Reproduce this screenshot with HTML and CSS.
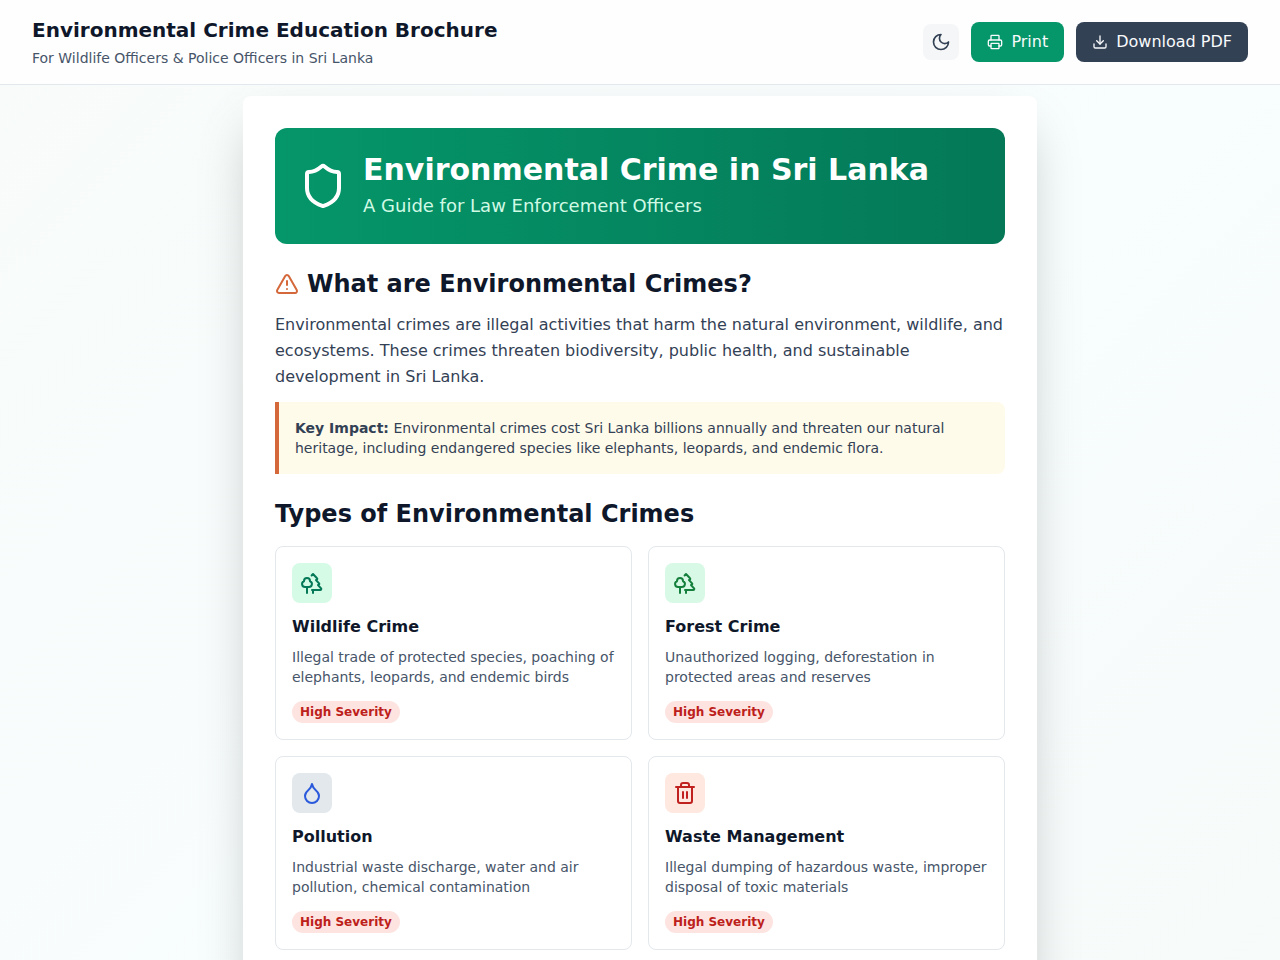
FILE: index.html
```html
<!DOCTYPE html>
<html lang="en">
<head>
    <meta charset="UTF-8">
    <meta name="viewport" content="width=device-width, initial-scale=1.0">
    <title>Environmental Crime Education Brochure</title>
    <link rel="stylesheet" href="styles.css">
</head>
<body>
    <header class="toolbar">
        <div>
            <h1 class="toolbar-title">Environmental Crime Education Brochure</h1>
            <p class="toolbar-subtitle">For Wildlife Officers &amp; Police Officers in Sri Lanka</p>
        </div>
        <div class="toolbar-actions">
            <button type="button" class="btn-theme" aria-label="Toggle dark mode">
                <svg class="icon" width="20" height="20" viewBox="0 0 24 24"><path d="M12 3a6 6 0 0 0 9 9 9 9 0 1 1-9-9Z"/></svg>
            </button>
            <button type="button" class="btn btn-print">
                <svg class="icon" width="16" height="16" viewBox="0 0 24 24"><path d="M6 18H4a2 2 0 0 1-2-2v-5a2 2 0 0 1 2-2h16a2 2 0 0 1 2 2v5a2 2 0 0 1-2 2h-2"/><path d="M6 9V3a1 1 0 0 1 1-1h10a1 1 0 0 1 1 1v6"/><rect x="6" y="14" width="12" height="8" rx="1"/></svg>
                Print
            </button>
            <button type="button" class="btn btn-download">
                <svg class="icon" width="16" height="16" viewBox="0 0 24 24"><path d="M21 15v4a2 2 0 0 1-2 2H5a2 2 0 0 1-2-2v-4"/><path d="m7 10 5 5 5-5"/><path d="M12 15V3"/></svg>
                Download PDF
            </button>
        </div>
    </header>

    <main class="page">
        <div class="banner">
            <svg class="icon" width="48" height="48" viewBox="0 0 24 24"><path d="M20 13c0 5-3.5 7.5-7.66 8.95a1 1 0 0 1-.67-.01C7.5 20.5 4 18 4 13V6a1 1 0 0 1 1-1c2 0 4.5-1.2 6.24-2.72a1.17 1.17 0 0 1 1.52 0C14.51 3.81 17 5 19 5a1 1 0 0 1 1 1z"/></svg>
            <div>
                <h2 class="banner-title">Environmental Crime in Sri Lanka</h2>
                <p class="banner-subtitle">A Guide for Law Enforcement Officers</p>
            </div>
        </div>

        <section class="section">
            <h2 class="section-title">
                <svg class="icon icon-warning" width="24" height="24" viewBox="0 0 24 24"><path d="m21.73 18-8-14a2 2 0 0 0-3.48 0l-8 14A2 2 0 0 0 4 21h16a2 2 0 0 0 1.73-3"/><path d="M12 9v4"/><path d="M12 17h.01"/></svg>
                What are Environmental Crimes?
            </h2>
            <p class="intro">Environmental crimes are illegal activities that harm the natural environment, wildlife, and ecosystems. These crimes threaten biodiversity, public health, and sustainable development in Sri Lanka.</p>
            <p class="callout"><strong>Key Impact:</strong> Environmental crimes cost Sri Lanka billions annually and threaten our natural heritage, including endangered species like elephants, leopards, and endemic flora.</p>
        </section>

        <section class="section">
            <h2 class="section-title">Types of Environmental Crimes</h2>
            <div class="crime-grid">
                <article class="crime-card">
                    <div class="crime-icon wildlife">
                        <svg class="icon" width="24" height="24" viewBox="0 0 24 24"><path d="M10 10v.2A3 3 0 0 1 8.9 16H5a3 3 0 0 1-1-5.8V10a3 3 0 0 1 6 0Z"/><path d="M7 16v6"/><path d="M13 19v3"/><path d="M12 19h8.3a1 1 0 0 0 .7-1.7L18 14h.3a1 1 0 0 0 .7-1.7L16 9h.2a1 1 0 0 0 .8-1.7L13 3l-1.4 1.5"/></svg>
                    </div>
                    <h3>Wildlife Crime</h3>
                    <p>Illegal trade of protected species, poaching of elephants, leopards, and endemic birds</p>
                    <div class="severity"><span class="badge">High Severity</span></div>
                </article>
                <article class="crime-card">
                    <div class="crime-icon forest">
                        <svg class="icon" width="24" height="24" viewBox="0 0 24 24"><path d="M10 10v.2A3 3 0 0 1 8.9 16H5a3 3 0 0 1-1-5.8V10a3 3 0 0 1 6 0Z"/><path d="M7 16v6"/><path d="M13 19v3"/><path d="M12 19h8.3a1 1 0 0 0 .7-1.7L18 14h.3a1 1 0 0 0 .7-1.7L16 9h.2a1 1 0 0 0 .8-1.7L13 3l-1.4 1.5"/></svg>
                    </div>
                    <h3>Forest Crime</h3>
                    <p>Unauthorized logging, deforestation in protected areas and reserves</p>
                    <div class="severity"><span class="badge">High Severity</span></div>
                </article>
                <article class="crime-card">
                    <div class="crime-icon pollution">
                        <svg class="icon" width="24" height="24" viewBox="0 0 24 24"><path d="M12 22a7 7 0 0 0 7-7c0-2-1-3.9-3-5.5s-3.5-4-4-6.5c-.5 2.5-2 4.9-4 6.5C6 11.1 5 13 5 15a7 7 0 0 0 7 7z"/></svg>
                    </div>
                    <h3>Pollution</h3>
                    <p>Industrial waste discharge, water and air pollution, chemical contamination</p>
                    <div class="severity"><span class="badge">High Severity</span></div>
                </article>
                <article class="crime-card">
                    <div class="crime-icon waste">
                        <svg class="icon" width="24" height="24" viewBox="0 0 24 24"><path d="M3 6h18"/><path d="M19 6v14c0 1-1 2-2 2H7c-1 0-2-1-2-2V6"/><path d="M8 6V4c0-1 1-2 2-2h4c1 0 2 1 2 2v2"/><path d="M10 11v6"/><path d="M14 11v6"/></svg>
                    </div>
                    <h3>Waste Management</h3>
                    <p>Illegal dumping of hazardous waste, improper disposal of toxic materials</p>
                    <div class="severity"><span class="badge">High Severity</span></div>
                </article>
            </div>
        </section>
    </main>
</body>
</html>
```

FILE: styles.css
```css
:root {
    --green: #059669;
    --green-dark: #047857;
    --text-dark: #0f172a;
    --text: #334155;
    --text-muted: #475569;
    --border: #e2e8ec;
    --warning: #d4683a;
}

* {
    box-sizing: border-box;
}

body {
    margin: 0;
    min-height: 100vh;
    font-family: "DejaVu Sans", sans-serif;
    font-size: 16px;
    line-height: 24px;
    color: var(--text-dark);
    background: linear-gradient(to bottom right, #f8fbfa, #f8fdfd, #f6faf9);
}

h1, h2, h3, p {
    margin: 0;
}

button {
    border: none;
    font: inherit;
    cursor: pointer;
}

.icon {
    display: block;
    flex-shrink: 0;
    fill: none;
    stroke: currentColor;
    stroke-width: 2;
    stroke-linecap: round;
    stroke-linejoin: round;
}

/* Top bar */
.toolbar {
    position: sticky;
    top: 0;
    display: flex;
    align-items: center;
    justify-content: space-between;
    padding: 16px 32px;
    background: #fefefe;
    border-bottom: 1px solid var(--border);
    z-index: 10;
}

.toolbar-title {
    font-size: 20px;
    line-height: 28px;
    margin-bottom: 4px;
}

.toolbar-subtitle {
    font-size: 14px;
    line-height: 20px;
    color: var(--text-muted);
}

.toolbar-actions {
    display: flex;
    align-items: center;
    gap: 12px;
}

.btn-theme {
    padding: 8px;
    border-radius: 8px;
    background: #f4f6f7;
    color: var(--text);
}

.btn {
    display: flex;
    align-items: center;
    gap: 8px;
    padding: 8px 16px;
    border-radius: 8px;
    color: #f8fafc;
}

.btn-print {
    background: var(--green);
}

.btn-download {
    background: #334155;
}

/* Brochure page */
.page {
    max-width: 794px;
    min-height: 1123px;
    margin: 11px auto 48px;
    padding: 32px;
    border-radius: 8px;
    background: #ffffff;
    box-shadow: 0 25px 50px -12px rgba(0, 0, 0, 0.25);
}

.banner {
    display: flex;
    align-items: center;
    gap: 16px;
    padding: 24px;
    border-radius: 12px;
    background: linear-gradient(to right, var(--green), var(--green-dark));
    color: #ffffff;
}

.banner-title {
    font-size: 30px;
    line-height: 36px;
    margin-bottom: 4px;
}

.banner-subtitle {
    font-size: 18px;
    line-height: 28px;
    color: #d1fae5;
}

.section {
    margin-top: 24px;
}

.section-title {
    display: flex;
    align-items: center;
    gap: 8px;
    font-size: 24px;
    line-height: 32px;
}

.icon-warning {
    color: var(--warning);
}

.intro {
    margin: 12px 0;
    line-height: 26px;
    color: var(--text);
}

.callout {
    padding: 16px;
    border-left: 4px solid var(--warning);
    border-radius: 0 8px 8px 0;
    background: #fffbeb;
    color: var(--text);
    font-size: 14px;
    line-height: 20px;
}

/* Crime cards */
.crime-grid {
    display: grid;
    grid-template-columns: repeat(2, 1fr);
    gap: 16px;
    margin-top: 16px;
}

.crime-card {
    padding: 16px;
    border: 1px solid var(--border);
    border-radius: 8px;
}

.crime-icon {
    display: flex;
    align-items: center;
    justify-content: center;
    width: 40px;
    height: 40px;
    margin-bottom: 12px;
    border-radius: 8px;
}

.wildlife {
    background: #d5fae5;
    color: #047857;
}

.forest {
    background: #d9f9e7;
    color: #15803d;
}

.pollution {
    background: #e2e8ec;
    color: #2b59dc;
}

.waste {
    background: #fee8e0;
    color: #c0211f;
}

.crime-card h3 {
    font-size: 16px;
    line-height: 24px;
    margin-bottom: 8px;
}

.crime-card p {
    font-size: 14px;
    line-height: 20px;
    color: var(--text-muted);
}

.severity {
    display: flex;
    margin-top: 14px;
}

.badge {
    padding: 4px 8px;
    border-radius: 12px;
    background: #fee4e1;
    color: #bd201a;
    font-size: 12px;
    font-weight: bold;
    line-height: 14px;
}

@media (max-width: 640px) {
    .toolbar {
        flex-direction: column;
        gap: 12px;
    }

    .crime-grid {
        grid-template-columns: 1fr;
    }
}
```
